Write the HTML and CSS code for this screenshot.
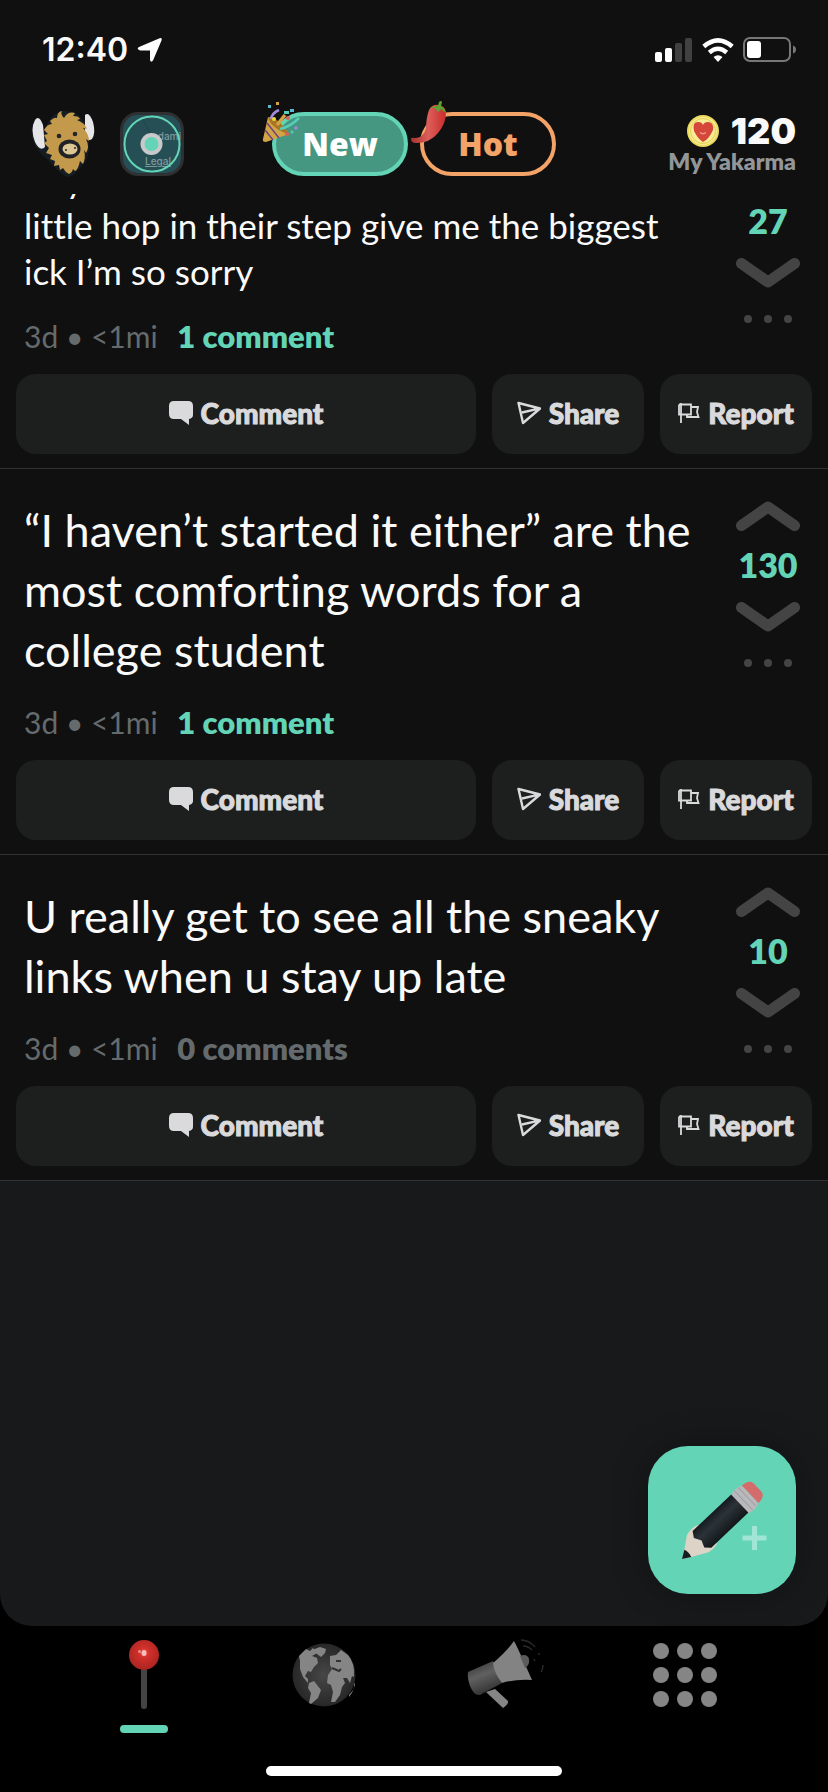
FILE: index.html
```html
<!DOCTYPE html>
<html lang="en">
<head>
<meta charset="utf-8">
<meta name="viewport" content="width=device-width, initial-scale=1">
<title>Yakarma feed</title>
<link rel="stylesheet" href="styles.css">
</head>
<body>
<svg class="defs" width="0" height="0" aria-hidden="true">
  <symbol id="up" viewBox="0 0 64 30"><path d="M5.500 24.500 32 6 58.500 24.500" fill="none" stroke="currentColor" stroke-width="11" stroke-linecap="round" stroke-linejoin="round"/></symbol>
  <symbol id="down" viewBox="0 0 64 30"><path d="M5.500 5.500 32 24 58.500 5.500" fill="none" stroke="currentColor" stroke-width="11" stroke-linecap="round" stroke-linejoin="round"/></symbol>
  <symbol id="dots" viewBox="0 0 48 8"><g fill="currentColor"><circle cx="4" cy="4" r="4"/><circle cx="24" cy="4" r="4"/><circle cx="44" cy="4" r="4"/></g></symbol>
  <symbol id="bubble" viewBox="0 0 24 24"><path d="M5 0H19Q24 0 24 5V14Q24 17 20 18V24L12 18H5Q0 18 0 13V5Q0 0 5 0Z" fill="currentColor"/></symbol>
  <symbol id="send" viewBox="0 0 24 24"><path d="M1.500 2 23 7.500 6 22ZM5 11.500 22 7.700" fill="none" stroke="currentColor" stroke-width="2.400" stroke-linejoin="round"/></symbol>
  <symbol id="flag" viewBox="0 0 22 22"><path d="M3 1V21M1 2.500H13V12.500H1V2.500M13 5H20L19 10 20.500 15H9V12.500" fill="none" stroke="currentColor" stroke-width="1.800"/></symbol>
</svg>

<header class="top">
  <div class="status">
    <div class="status-side">
      <span class="time">12:40</span>
      <svg width="26" height="26" viewBox="0 0 26 26" aria-hidden="true"><path d="M22 1.500Q25.500 0 24.500 3.500L16 23.500Q14 26 13 23V13.500H3Q-1 12 2 10Z" fill="#fff"/></svg>
    </div>
    <div class="status-side status-icons">
      <svg width="38" height="24" viewBox="0 0 38 24" aria-hidden="true"><g fill="#fff"><rect x="0" y="14" width="7" height="10" rx="2"/><rect x="10" y="10" width="7" height="14" rx="2"/></g><g fill="#404040"><rect x="20" y="5" width="7" height="19" rx="2"/><rect x="30" y="0" width="7" height="24" rx="2"/></g></svg>
      <svg width="32" height="24" viewBox="0 0 32 24" aria-hidden="true"><g fill="none" stroke="#fff" stroke-width="4.500"><path d="M1.800 8.500Q16-3.800 30.200 8.500"/><path d="M7.300 14.500Q16 7 24.700 14.500"/></g><path d="M11.500 19Q16 15.500 20.500 19L16 24Z" fill="#fff"/></svg>
      <svg width="54" height="26" viewBox="0 0 54 26" aria-hidden="true"><rect x="1" y="1" width="46" height="23" rx="6" fill="none" stroke="#777" stroke-width="2"/><rect x="4" y="4" width="14" height="17" rx="3" fill="#fff"/><path d="M50 8.500Q53 9.500 53 12.500T50 16.500Z" fill="#777"/></svg>
    </div>
  </div>
  <div class="bar">
    <div class="bar-left">
      <button class="plain" aria-label="Profile">
        <svg width="66" height="68" viewBox="0 0 66 68">
          <path d="M6 8Q11 5 15 20Q20 4 31 1Q48 0 54 12Q56 2 61 8Q68 25 59 32Q60 48 51 57Q43 67 38 67Q29 64 18 50Q-1 35 2 18Z" fill="#161d22"/>
          <path d="M5 10Q9 4 13 15L15 37Q10 42 5 32Q0 19 5 10Z" fill="#e6e6e8"/>
          <path d="M55 5Q59 1 63 12Q66 23 62 29Q57 32 55 26Z" fill="#e6e6e8"/>
          <path d="M27 8Q27 2 32 1Q30 4 34 8Q38 1 45 3L43 6Q49 6 50 9L47 10Q55 13 57 19L53 18Q59 24 59 31L56 29Q60 37 56 43L54 40Q56 48 53 54L50 51Q48 60 45 61L43 59Q42 63 39 64Q35 62 33 58L30 60L29 55L24 56L25 51L20 49L22 45L16 43L19 38L14 33L17 31L14 25L18 24L14 20Q17 14 22 14L20 11Q24 7 27 8Z" fill="#c39a4c"/>
          <circle cx="29" cy="26" r="2.300" fill="#24242a"/><circle cx="45" cy="24" r="2.300" fill="#24242a"/>
          <ellipse cx="39.500" cy="39" rx="11" ry="9.500" fill="#202226"/>
          <ellipse cx="40" cy="39" rx="7.500" ry="5.500" fill="#dcc794"/>
          <circle cx="36" cy="40" r="1.100" fill="#333"/><circle cx="45" cy="38" r="1.100" fill="#333"/>
        </svg>
      </button>
      <button class="map" aria-label="Location">
        <span class="map-name">dami</span><span class="map-legal">Legal</span>
        <svg width="58" height="58" viewBox="0 0 58 58"><path d="M20 4 28 20" stroke="#204448"/><circle cx="29" cy="29" r="27.500" fill="none" stroke="#63d4b6" stroke-width="2"/><circle cx="28.500" cy="29" r="11" fill="#c9c9cc"/><circle cx="28.500" cy="29" r="7" fill="#63d4b6"/></svg>
      </button>
    </div>
    <div class="pills">
      <button class="pill pill-new">New
        <svg class="badge" width="40" height="42" viewBox="0 0 40 42" aria-hidden="true">
          <path d="M6 16Q15 16 27 33L4 41Q0 41 1 38Z" fill="#d2a444"/>
          <path d="M5 22 17 37M3 29 11 39" stroke="#6b4585" stroke-width="1.500"/>
          <path d="M6 16Q15 15 27 33Q21 32 14 27T6 16Z" fill="#a97424"/>
          <path d="M9 18Q10 12 17 9" fill="none" stroke="#a38bdc" stroke-width="2.500"/>
          <path d="M15 24 23 14" stroke="#d2a444" stroke-width="3.500"/>
          <path d="M18 28Q28 26 37 17" fill="none" stroke="#55cdb9" stroke-width="2.500"/>
          <circle cx="12" cy="18" r="2" fill="#e8dc3e"/><circle cx="26" cy="17" r="2" fill="#d95f55"/><circle cx="25" cy="33" r="2" fill="#d95f55"/><circle cx="34" cy="27" r="1.700" fill="#a38bdc"/><circle cx="30" cy="31" r="1.500" fill="#55cdb9"/><path d="M6 4h3v3h-3zM28 8h4v3h-4z" fill="#58b9cf"/><path d="M22 10h5v3h-5z" fill="#55cdb9"/><path d="M14 1h3v3h-3z" fill="#d2a444"/>
        </svg>
      </button>
      <button class="pill pill-hot">Hot
        <svg class="badge" width="40" height="42" viewBox="0 0 40 42" aria-hidden="true">
          <defs><linearGradient id="chili"><stop offset="0" stop-color="#a8322e"/><stop offset=".5" stop-color="#dc5e59"/><stop offset="1" stop-color="#c92c2b"/></linearGradient></defs>
          <path d="M19 9Q22 3 29 4Q35 5 36 11Q36 23 28 32Q20 42 6 42Q1 42 1 38Q1 36 5 37Q13 37 16 28Q16 17 19 9Z" fill="url(#chili)"/>
          <path d="M20 7Q23 5 28 5L29 1Q31-1 32 1L31 5Q35 7 36 12L31 8 28 11 25 7Z" fill="#58a533"/>
        </svg>
      </button>
    </div>
    <div class="karma">
      <div class="karma-row">
        <svg width="32" height="32" viewBox="0 0 32 32" aria-hidden="true"><circle cx="16" cy="16" r="15" fill="#f8ed96" stroke="#e9d95c" stroke-width="2"/><circle cx="16" cy="16" r="12.500" fill="none" stroke="#e3cd4c"/><path d="M16 27Q11 24 7 16Q5 7 11 7Q15 7 16 10Q17 7 21 7Q27 7 26 15Q22 24 16 27Z" fill="#d44739"/><path d="M13 17.500Q16 20 19 17.500" stroke="#ef9b94" stroke-width="1.500" fill="none"/></svg>
        <span class="karma-count">120</span>
      </div>
      <div class="karma-label">My Yakarma</div>
    </div>
  </div>
</header>

<main class="feed">
  <article class="post post-scrolled">
    <div class="post-main">
      <div class="post-body">
        <p class="text text-long">Boys with a<br>little hop in their step give me the biggest ick I’m so sorry</p>
        <div class="meta">3d • &lt;1mi <a class="count" href="#">1 comment</a></div>
      </div>
      <div class="vote">
        <button class="plain" aria-label="Upvote"><svg width="64" height="30"><use href="#up"/></svg></button>
        <span class="score">27</span>
        <button class="plain" aria-label="Downvote"><svg width="64" height="30"><use href="#down"/></svg></button>
        <button class="plain more" aria-label="More"><svg width="48" height="8"><use href="#dots"/></svg></button>
      </div>
    </div>
    <div class="actions">
      <button class="action wide"><svg width="24" height="24"><use href="#bubble"/></svg>Comment</button>
      <button class="action"><svg width="24" height="24"><use href="#send"/></svg>Share</button>
      <button class="action"><svg width="22" height="22"><use href="#flag"/></svg>Report</button>
    </div>
  </article>

  <article class="post">
    <div class="post-main">
      <div class="post-body">
        <p class="text">“I haven’t started it either” are the most comforting words for a college student</p>
        <div class="meta">3d • &lt;1mi <a class="count" href="#">1 comment</a></div>
      </div>
      <div class="vote">
        <button class="plain" aria-label="Upvote"><svg width="64" height="30"><use href="#up"/></svg></button>
        <span class="score">130</span>
        <button class="plain" aria-label="Downvote"><svg width="64" height="30"><use href="#down"/></svg></button>
        <button class="plain more" aria-label="More"><svg width="48" height="8"><use href="#dots"/></svg></button>
      </div>
    </div>
    <div class="actions">
      <button class="action wide"><svg width="24" height="24"><use href="#bubble"/></svg>Comment</button>
      <button class="action"><svg width="24" height="24"><use href="#send"/></svg>Share</button>
      <button class="action"><svg width="22" height="22"><use href="#flag"/></svg>Report</button>
    </div>
  </article>

  <article class="post">
    <div class="post-main">
      <div class="post-body">
        <p class="text">U really get to see all the sneaky links when u stay up late</p>
        <div class="meta">3d • &lt;1mi <a class="count count-none" href="#">0 comments</a></div>
      </div>
      <div class="vote">
        <button class="plain" aria-label="Upvote"><svg width="64" height="30"><use href="#up"/></svg></button>
        <span class="score">10</span>
        <button class="plain" aria-label="Downvote"><svg width="64" height="30"><use href="#down"/></svg></button>
        <button class="plain more" aria-label="More"><svg width="48" height="8"><use href="#dots"/></svg></button>
      </div>
    </div>
    <div class="actions">
      <button class="action wide"><svg width="24" height="24"><use href="#bubble"/></svg>Comment</button>
      <button class="action"><svg width="24" height="24"><use href="#send"/></svg>Share</button>
      <button class="action"><svg width="22" height="22"><use href="#flag"/></svg>Report</button>
    </div>
  </article>

  <button class="compose" aria-label="New post">
    <svg width="148" height="148" viewBox="0 0 148 148">
      <defs><linearGradient id="lead" x1="0" y1="0" x2="0" y2="1"><stop offset="0" stop-color="#151a1e"/><stop offset=".4" stop-color="#2c3338"/><stop offset="1" stop-color="#12171a"/></linearGradient></defs>
      <path d="M104 80h5v9.500h9.500v5H109v9.500h-5v-9.500H94.500v-5h9.500z" fill="#a1e6d5"/>
      <g transform="translate(34 113) rotate(-43.500)">
        <path d="M0 0 8-5 20-14Q29-17 36-13V13Q30 15 23 13L8 5Z" fill="#ddd3c6"/>
        <path d="M0 0 8-5Q10 0 8 5Z" fill="#171c20"/>
        <path d="M27-13H82V12H29L24 7 27 0 23-7Z" fill="url(#lead)"/>
        <path d="M80-13Q88-15 94-12V12Q88 15 80 13Z" fill="#b9b9bb"/>
        <path d="M85-13V13M90-13V12" stroke="#9fa0a3" fill="none"/>
        <path d="M94-12Q103-12 104-6V6Q103 12 94 12Z" fill="#d56c6c"/>
      </g>
    </svg>
  </button>
</main>

<nav class="tabs">
  <a class="tab active" href="#" aria-label="Nearby">
    <svg width="72" height="76" viewBox="0 0 72 76">
      <defs><radialGradient id="ball" cx=".5" cy=".42" r=".6"><stop offset="0" stop-color="#e8504a"/><stop offset=".3" stop-color="#d0302b"/><stop offset="1" stop-color="#a82420"/></radialGradient></defs>
      <rect x="33" y="30" width="6" height="41" rx="3" fill="#444"/>
      <circle cx="36" cy="17" r="15" fill="url(#ball)"/>
      <ellipse cx="36" cy="15" rx="2.500" ry="3" fill="#f6bdb9"/><circle cx="31.500" cy="13.500" r="1.500" fill="#eb8d88"/>
    </svg>
  </a>
  <a class="tab" href="#" aria-label="World">
    <svg width="72" height="76" viewBox="0 0 72 76">
      <defs><radialGradient id="sea"><stop offset="0" stop-color="#474747"/><stop offset="1" stop-color="#272727"/></radialGradient></defs>
      <circle cx="36" cy="37" r="31.500" fill="url(#sea)"/>
      <g fill="#858585">
        <path d="M11 18 18 11 22 13 25 10 29 15 24 18 29 20 30 25 26 29 23 34 20 33 17 38 20 41 20 45 15 39 12 31 12 23Z"/>
        <path d="M21 45 26 43 33 52 30 60 23 66 21 65 23 55 20 50Z"/>
        <path d="M24 12 32 9 38 11 37 15 33 19 29 16Z"/>
        <path d="M42 18 48 17 53 12 60 17Q67 25 66 39L64 38 62 45 59 40 55 40 57 45 54 49 52 57 47 64 43 64 45 54 43 47 39 45 40 37 44 31 42 27Z"/>
        <path d="M61 57 66 51 66 45 67 46Q66 53 61 59Z"/>
      </g>
      <path d="M44 30 51 33 53 31M48 23 53 23" stroke="#333" stroke-width="2" fill="none"/>
    </svg>
  </a>
  <a class="tab" href="#" aria-label="Announcements">
    <svg width="80" height="76" viewBox="0 0 80 76">
      <defs><linearGradient id="horn" x1="0" y1="0" x2=".4" y2="1"><stop offset="0" stop-color="#303030"/><stop offset=".5" stop-color="#606060"/><stop offset="1" stop-color="#333"/></linearGradient></defs>
      <path d="M22 54 31 51 44 63Q45 66 39 70Z" fill="#858585"/>
      <path d="M4 34 29 23 38 45 16 57Q10 58 6 48Q3 39 4 34Z" fill="url(#horn)"/>
      <path d="M50 3Q53 8 68 42Q51 41 38 45Q30 35 29 25Q43 13 50 3Z" fill="#838383"/>
      <path d="M56 18Q63 15 65 21Q66 27 61 30Z" fill="#5b5b5b"/>
      <path d="M57 2Q65 2 71 9M59 8Q64 8 68 12M75 15 75 17M70 21 71 23M79 27Q79 31 77 34" stroke="#292929" stroke-width="1.500" fill="none"/>
    </svg>
  </a>
  <a class="tab" href="#" aria-label="More">
    <svg width="72" height="76" viewBox="0 0 72 76"><g fill="#858585"><circle cx="13" cy="13" r="8"/><circle cx="37" cy="13" r="8"/><circle cx="61" cy="13" r="8"/><circle cx="13" cy="37" r="8"/><circle cx="37" cy="37" r="8"/><circle cx="61" cy="37" r="8"/><circle cx="13" cy="61" r="8"/><circle cx="37" cy="61" r="8"/><circle cx="61" cy="61" r="8"/></g></svg>
  </a>
</nav>
<div class="home"></div>
</body>
</html>
```
FILE: styles.css
```css
* { box-sizing: border-box; }
body {
  margin: 0;
  min-height: 100vh;
  display: flex;
  flex-direction: column;
  background: #000;
  color: #fafafa;
  font-family: Lato, "Noto Sans", sans-serif;
  font-variant-ligatures: none;
}
svg { display: block; flex: none; }
.defs { position: absolute; }
button { font-family: inherit; color: inherit; border: 0; padding: 0; background: none; cursor: pointer; }
.plain { display: block; }

.top {
  position: relative;
  z-index: 1;
  height: 194px;
  background: #101010;
  display: flex;
  flex-direction: column;
  gap: 42px;
  padding-top: 30px;
}
.status {
  flex: none;
  display: flex;
  justify-content: space-between;
  align-items: center;
  height: 40px;
  padding: 0 31px 0 42px;
}
.status-side { display: flex; align-items: center; gap: 9px; }
.time { font: 600 32px/40px Inter, sans-serif; }

.bar {
  display: grid;
  grid-template: 64px / 1fr auto 1fr;
  align-items: center;
  padding: 0 30px;
}
.bar-left { display: flex; align-items: center; gap: 24px; }
.map {
  position: relative;
  width: 64px;
  height: 64px;
  border: 3px solid #2e3032;
  border-radius: 18px;
  background: #264f55;
  color: #7f9a9e;
  overflow: hidden;
  font: 500 10px/12px Inter, sans-serif;
}
.map-name { position: absolute; right: 0; top: 15px; }
.map-legal { position: absolute; left: 22px; top: 40px; text-decoration: underline; }
.map svg { position: relative; }
.pills { display: flex; gap: 12px; }
.pill {
  position: relative;
  width: 136px;
  height: 64px;
  border: 4px solid;
  border-radius: 32px;
  font: 800 32px/56px "Open Sans", sans-serif;
}
.pill-new { border-color: #63d4b6; background: #469782; color: #fff; }
.pill-hot { border-color: #f3a268; color: #f3a268; }
.badge { position: absolute; left: -14px; top: -15px; }
.karma { justify-self: end; text-align: right; padding: 2px 2px 0 0; }
.karma-row { display: flex; justify-content: flex-end; align-items: center; gap: 12px; }
.karma-count { font: 900 36px/32px Inter, sans-serif; }
.karma-label { color: #929699; font-size: 23px; line-height: 28px; font-weight: 800; }

.feed {
  position: relative;
  flex: 1;
  overflow: hidden;
  background: #18191b;
  border-radius: 0 0 32px 32px;
}
.post { background: #101010; border-bottom: 1px solid #303234; padding: 0 16px 14px; }
.post-scrolled { margin-top: -69px; }
.post-main { display: flex; align-items: flex-start; padding: 28px 0 18px 8px; }
.post-body { flex: 1; padding: 3px 4px 0 0; }
.text { margin: 0 0 22px; font-size: 45px; line-height: 60px; }
.text-long { padding-right: 16px; font-size: 35px; line-height: 46px; }
.meta { color: #656b6d; font-size: 30px; line-height: 40px; }
.count { margin-left: 12px; color: #63d4b6; font-size: 31px; font-weight: 800; text-decoration: none; }
.count-none { color: #656b6d; }
.vote {
  display: flex;
  flex-direction: column;
  align-items: center;
  width: 88px;
  padding-top: 4px;
  color: #444;
}
.score { margin: 14px 0 17px; color: #63d4b6; font-size: 34px; line-height: 40px; font-weight: 800; }
.more { margin-top: 27px; }
.actions { display: flex; gap: 16px; }
.action {
  flex: 0 0 152px;
  height: 80px;
  padding-bottom: 3px;
  display: flex;
  justify-content: center;
  align-items: center;
  gap: 8px;
  border-radius: 20px;
  background: #1d1f1f;
  color: #dadadc;
  font-size: 28px;
  font-weight: 900;
  -webkit-text-stroke: 1px #dadadc;
}
.action.wide { flex: 1; }
.compose {
  position: absolute;
  right: 32px;
  bottom: 32px;
  border-radius: 40px;
  background: #63d4b6;
  box-shadow: 0 0 36px rgba(0, 0, 0, .3);
}

.tabs { display: flex; padding: 12px 54px 0; height: 108px; }
.tab { flex: 1; display: flex; flex-direction: column; align-items: center; }
.tab.active::after {
  content: "";
  width: 48px;
  height: 8px;
  margin-top: 11px;
  border-radius: 4px;
  background: #63d4b6;
}
.home { width: 296px; height: 10px; margin: 32px auto 16px; border-radius: 5px; background: #fff; }
```
